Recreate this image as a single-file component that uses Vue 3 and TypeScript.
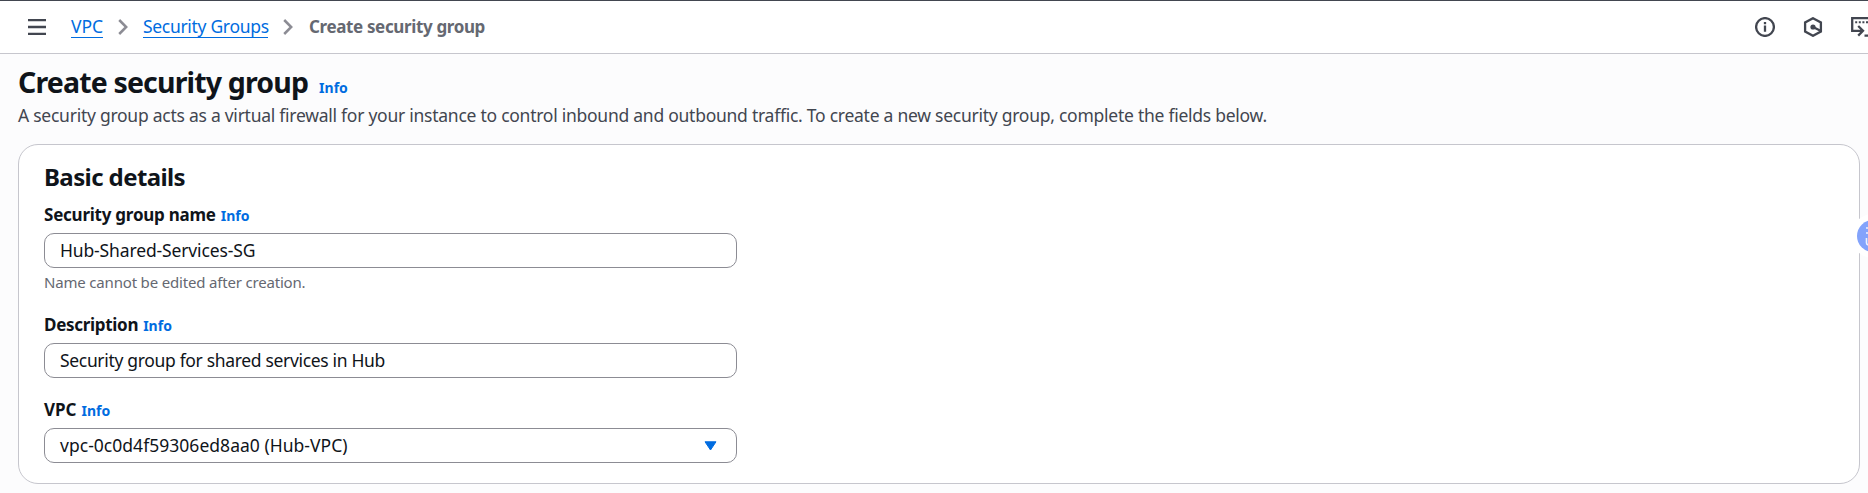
<script setup lang="ts">
import { ref } from 'vue'

interface Field {
  id: string
  label: string
  value: string
  hint?: string
  select?: boolean
}

const fields = ref<Field[]>([
  { id: 'name', label: 'Security group name', value: 'Hub-Shared-Services-SG', hint: 'Name cannot be edited after creation.' },
  { id: 'description', label: 'Description', value: 'Security group for shared services in Hub' },
  { id: 'vpc', label: 'VPC', value: 'vpc-0c0d4f59306ed8aa0 (Hub-VPC)', select: true },
])
</script>

<template>
  <div class="page">
    <header class="topbar">
      <svg class="menu" viewBox="0 0 18 16"><path d="M0 1.2h18M0 8h18M0 14.8h18" /></svg>
      <nav class="crumbs">
        <a class="link vpc">VPC</a>
        <svg class="chevron" viewBox="0 0 10 16"><path d="M1.2 1l7 7-7 7" /></svg>
        <a class="link groups">Security Groups</a>
        <svg class="chevron second" viewBox="0 0 10 16"><path d="M1.2 1l7 7-7 7" /></svg>
        <span class="current">Create security group</span>
      </nav>
      <div class="tools">
        <svg class="tool info-icon" viewBox="0 0 20 20">
          <circle cx="10" cy="10" r="8.9" />
          <path d="M10 8.5v6.2M10 5v2.2" />
        </svg>
        <svg class="tool hex-icon" viewBox="0 0 20 20">
          <path d="M10 1.2l7.9 4.3v9L10 18.8l-7.9-4.3v-9z" />
          <circle class="solid" cx="10" cy="10" r="2.6" />
          <path d="M10 10l7 3.6" />
        </svg>
        <svg class="tool shell-icon" viewBox="0 0 24 20">
          <path d="M6.5 13.8H1.2V1.1H24M1 13.8h10M7.2 9l4.8 4.8L7.2 18.6M13.5 18.6H24" />
          <path class="dots" d="M4.2 5.2h14" />
        </svg>
      </div>
    </header>

    <main class="content">
      <div class="heading">
        <h1>Create security group</h1>
        <a class="info">Info</a>
      </div>
      <p class="intro">A security group acts as a virtual firewall for your instance to control inbound and outbound traffic. To create a new security group, complete the fields below.</p>

      <section class="card">
        <h2>Basic details</h2>
        <div v-for="field in fields" :key="field.id" class="field" :class="field.id">
          <div class="label-row">
            <label>{{ field.label }}</label>
            <a class="info">Info</a>
          </div>
          <div class="control">
            <span class="value">{{ field.value }}</span>
            <svg v-if="field.select" class="caret" viewBox="0 0 13 10"><path d="M1 .8h11L6.5 9z" /></svg>
          </div>
          <div v-if="field.hint" class="hint">{{ field.hint }}</div>
        </div>
      </section>
    </main>

    <div class="assistant">
      <div class="bubble">
        <svg viewBox="0 0 12 20"><path d="M1 2h8M4 2v5M1 7h8M1.5 12v5q0 2 3 2h6" /></svg>
      </div>
    </div>
  </div>
</template>

<style>
body { margin: 0; overflow: hidden; }
</style>

<style scoped>
.page {
  position: relative;
  box-sizing: border-box;
  width: 100%;
  height: 493px;
  overflow: hidden;
  background: #fcfcfd;
  color: #0f141a;
  font-family: "Noto Sans", "Open Sans", sans-serif;
  font-size: 17.5px;
  line-height: 25px;
}
.topbar {
  box-sizing: border-box;
  display: flex;
  align-items: center;
  height: 54px;
  padding-left: 28px;
  border-top: 1px solid #424650;
  border-bottom: 1px solid #c6c6cd;
  background: #fff;
}
.menu { width: 18px; height: 16px; fill: none; stroke: #424650; stroke-width: 2.3; }
.crumbs { display: flex; align-items: center; margin-left: 25px; padding-bottom: 1px; }
.link {
  height: 22px;
  line-height: 22px;
  color: #006ce0;
  border-bottom: 1px solid #006ce0;
}
.link.vpc { width: 32px; }
.link.groups { width: 125px; letter-spacing: -0.31px; white-space: nowrap; }
.chevron { width: 10px; height: 16px; margin: 0 15px; fill: none; stroke: #8c8c94; stroke-width: 2.5; }
.current { margin-left: 1px; color: #656871; font-size: 17px; font-weight: 700; letter-spacing: -0.36px; }
.tools { display: flex; flex: none; align-items: center; gap: 28px; margin-left: auto; margin-right: -7px; }
.tool { width: 20px; height: 20px; fill: none; stroke: #424650; stroke-width: 2.3; }
.shell-icon { width: 24px; }
.solid { fill: #424650; stroke: none; }
.dots { stroke-dasharray: 2 1.6; stroke-width: 2; }

.content { padding: 11px 8px 0 18px; }
.heading { display: flex; align-items: baseline; height: 35px; }
h1 { margin: 0; font-size: 28.5px; line-height: 35px; letter-spacing: -0.84px; }
.info { color: #006ce0; font-size: 14px; font-weight: 700; }
.heading .info { margin-left: 11px; }
.intro { margin: 3px 0 0; color: #424650; letter-spacing: -0.257px; white-space: nowrap; }

.card {
  box-sizing: border-box;
  height: 340px;
  margin-top: 16px;
  padding: 17px 25px 0;
  border: 1px solid #c6c6cd;
  border-radius: 20px;
  background: #fff;
}
h2 { margin: 0; font-size: 24px; line-height: 30px; letter-spacing: -0.6px; }
.field { box-sizing: border-box; width: 693px; padding-top: 10px; }
.field.name { height: 110px; }
.field.description { height: 85px; }
.label-row { display: flex; align-items: baseline; gap: 5px; height: 26px; }
label { font-size: 17px; font-weight: 700; letter-spacing: -0.24px; }
.description label { letter-spacing: -0.3px; }
.vpc label { letter-spacing: 0; }
.control {
  box-sizing: border-box;
  display: flex;
  align-items: center;
  justify-content: space-between;
  height: 35px;
  margin-top: 5px;
  padding: 0 19px 0 15px;
  border: 1px solid #8c8c94;
  border-radius: 10px;
  background: #fff;
}
.value { line-height: 24px; padding-bottom: 1px; }
.name .value { letter-spacing: -0.14px; }
.description .value { letter-spacing: -0.33px; }
.vpc .value { letter-spacing: 0.03px; }
.caret { width: 13px; height: 10px; fill: #006ce0; stroke: #006ce0; stroke-width: 1; stroke-linejoin: round; }
.hint { margin-top: 4px; color: #656871; font-size: 15px; line-height: 20px; letter-spacing: -0.18px; }

.assistant {
  position: absolute;
  top: 214px;
  left: 1851px;
  width: 44px;
  height: 44px;
  border-radius: 50%;
  background: #fff;
}
.bubble { width: 32px; height: 32px; margin: 6px; border-radius: 50%; background: #83a3fb; }
.bubble svg { display: block; width: 12px; height: 20px; padding: 6px 0 0 8px; fill: none; stroke: #eef3ff; stroke-width: 1.6; }
</style>
